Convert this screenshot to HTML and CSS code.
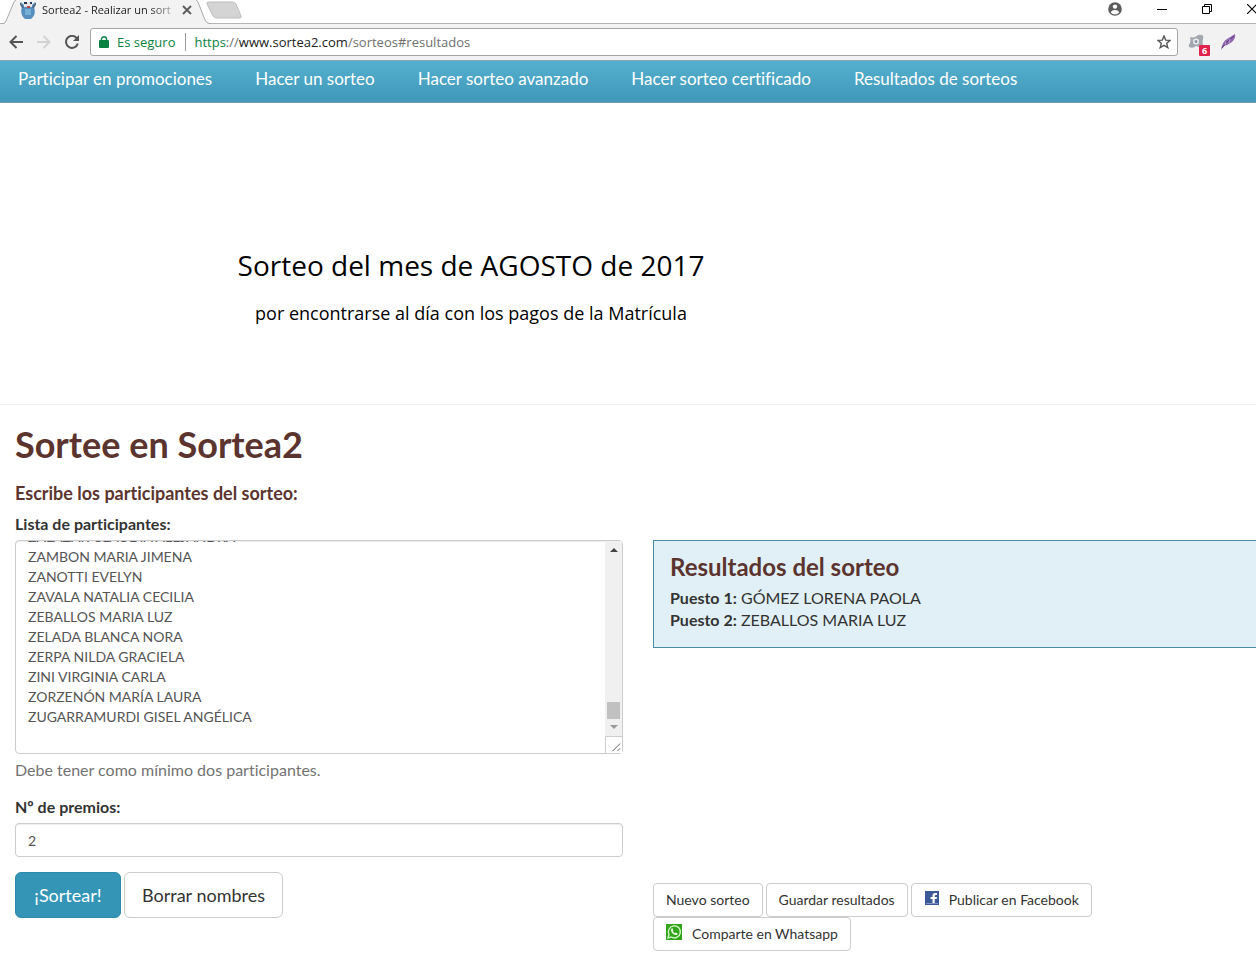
FILE: index.html
```html
<!DOCTYPE html>
<html lang="es">
<head>
<meta charset="utf-8">
<title>Sortea2 - Realizar un sorteo</title>
<link rel="stylesheet" href="styles.css">
</head>
<body>
<header class="browser">
  <div class="tabs">
    <div class="tab">
      <svg class="tab-edge" width="15" height="24" viewBox="0 0 15 24"><path d="M0 23.5H2Q4 23.5 5 21L13 2Q14 0 15 0V24H0Z" fill="#f2f2f2"/><path d="M0 23.5H2Q4 23.5 5 21L13 2Q14 0 15 0" fill="none" stroke="#a9a9a9"/></svg>
      <div class="tab-body">
        <svg width="16" height="18" viewBox="0 0 16 18"><path d="M1 1l3 3h8l3-3-1 5q2 6-1 10l-2 2H5l-2-2Q0 11 2 6Z" fill="#568fbd"/><path d="M4 1h8v5H4Z" fill="#e9e6e8"/><path d="M4 1h3v2H4zM10 1h2v2h-2z" fill="#28364b"/><path d="M7 5h3v2H7z" fill="#b34845"/><path d="M5 8h6v6H5z" fill="#73afd4"/><path d="M0 2l3 5M16 2l-3 5" stroke="#46637c" stroke-width="1.5"/></svg>
        <span class="tab-title">Sortea2 - Realizar un sort</span>
        <button class="plain" aria-label="Cerrar pestaña"><svg width="10" height="10" viewBox="0 0 10 10"><path d="M1 1l8 8M9 1l-8 8" stroke="#5a5a5a" stroke-width="1.8"/></svg></button>
      </div>
      <svg class="tab-edge" width="15" height="24" viewBox="0 0 15 24"><path d="M0 0Q1 0 2 2L9 20Q11 23.5 13 23.5H15V24H0Z" fill="#f2f2f2"/><path d="M0 0Q1 0 2 2L9 20Q11 23.5 13 23.5H15" fill="none" stroke="#a9a9a9"/></svg>
    </div>
    <button class="plain new-tab" aria-label="Nueva pestaña"><svg width="36" height="19" viewBox="0 0 36 19"><path d="M3 2h23q3 0 4 2l5 12q1 2-2 2H11q-3 0-4-2L1 4Q0 2 3 2Z" fill="#d4d4d4" stroke="#bcbcbc"/></svg></button>
    <div class="window-controls">
      <button class="plain" aria-label="Usuario"><svg width="14" height="14" viewBox="0 0 14 14"><circle cx="7" cy="7" r="6.8" fill="#5c5c5c"/><circle cx="7" cy="4.6" r="2.2" fill="#fff"/><path d="M2.6 10.2Q4 8 7 8t4.400 2.200Q9.500 12.500 7 12.500T2.600 10.200Z" fill="#fff"/></svg></button>
      <button class="plain" aria-label="Minimizar"><svg width="10" height="14" viewBox="0 0 10 14"><path d="M0 7.500h10" stroke="#000"/></svg></button>
      <button class="plain" aria-label="Restaurar"><svg width="10" height="10" viewBox="0 0 10 10"><path d="M.5 2.500h7v7h-7zM2.500 2.500v-2h7v7h-2" fill="none" stroke="#000"/></svg></button>
      <button class="plain" aria-label="Cerrar"><svg width="10" height="10" viewBox="0 0 10 10"><path d="M0 0l10 10M10 0L0 10" stroke="#000" stroke-width="1.200"/></svg></button>
    </div>
  </div>
  <div class="toolbar">
    <button class="plain" aria-label="Atrás"><svg width="14" height="14" viewBox="0 0 14 14"><path d="M14 7H1.500M7.500 1l-6 6 6 6" fill="none" stroke="#555" stroke-width="2"/></svg></button>
    <button class="plain" aria-label="Adelante"><svg width="14" height="14" viewBox="0 0 14 14"><path d="M0 7h12.500M6.500 1l6 6-6 6" fill="none" stroke="#d3d3d3" stroke-width="2"/></svg></button>
    <button class="plain" aria-label="Recargar"><svg width="14" height="14" viewBox="0 0 14 14"><path d="M12 3.500A6 6 0 1 0 12.800 8.500" fill="none" stroke="#555" stroke-width="2"/><path d="M14 0v6H8z" fill="#555"/></svg></button>
    <div class="address">
      <svg width="10" height="12" viewBox="0 0 10 12"><path d="M1 4h8q1 0 1 1v6q0 1-1 1H1q-1 0-1-1V5q0-1 1-1Z" fill="#0b8043"/><path d="M2.500 5V3a2.500 2.200 0 0 1 5 0v2" fill="none" stroke="#0b8043" stroke-width="1.400"/></svg>
      <span class="secure">Es seguro</span>
      <span class="url"><span class="green">https</span>://<span class="host">www.sortea2.com</span>/sorteos#resultados</span>
      <button class="plain star" aria-label="Favorito"><svg width="14" height="14" viewBox="0 0 14 14"><path d="M7 1l1.700 4.100 4.400.3-3.400 2.900 1.100 4.300L7 10.300l-3.800 2.300 1.100-4.300L.9 5.400l4.400-.3z" fill="none" stroke="#555" stroke-width="1.400"/></svg></button>
    </div>
    <div class="extensions">
      <button class="plain ext" aria-label="Extensión, 6 avisos"><svg width="16" height="16" viewBox="0 0 16 16"><path d="M2 3q3 1 6-.5Q10 0 14 1q2 1 1 4-1 3 0 6-4 3-7 1-3 3-7 1-1-2 1-4 1-3 0-6Z" fill="#a3a8b0"/><circle cx="8" cy="7.500" r="3" fill="#eee"/><circle cx="8" cy="7.500" r="1.500" fill="#8793a5"/></svg><span class="badge">6</span></button>
      <button class="plain" aria-label="Pluma"><svg width="15" height="16" viewBox="0 0 15 16"><path d="M0 16Q1 8 6 5t8-5q1 4-3 8Q7 11 3 12Z" fill="#9168ae"/><path d="M1 14Q5 8 13 2" fill="none" stroke="#5c347c"/><path d="M5 8l-1 3M9 5L8 9" stroke="#c8addd" stroke-width=".8"/></svg></button>
    </div>
  </div>
</header>
<nav class="nav">
  <a href="#">Participar en promociones</a>
  <a href="#">Hacer un sorteo</a>
  <a href="#">Hacer sorteo avanzado</a>
  <a href="#">Hacer sorteo certificado</a>
  <a href="#resultados">Resultados de sorteos</a>
</nav>
<section class="banner">
  <div class="banner-text">
    <p class="banner-title">Sorteo del mes de AGOSTO de 2017</p>
    <p class="banner-sub">por encontrarse al día con los pagos de la Matrícula</p>
  </div>
</section>
<main class="main">
  <h1>Sortee en Sortea2</h1>
  <div class="columns">
    <form class="draw">
      <h2>Escribe los participantes del sorteo:</h2>
      <label for="names">Lista de participantes:</label>
      <div class="names-box">
        <textarea id="names" class="field names">ZALAZAR CLAUDIA ALEJANDRA
ZAMBON MARIA JIMENA
ZANOTTI EVELYN
ZAVALA NATALIA CECILIA
ZEBALLOS MARIA LUZ
ZELADA BLANCA NORA
ZERPA NILDA GRACIELA
ZINI VIRGINIA CARLA
ZORZENÓN MARÍA LAURA
ZUGARRAMURDI GISEL ANGÉLICA
</textarea>
        <div class="scrollbar" aria-hidden="true">
          <div class="track">
            <svg width="8" height="4" viewBox="0 0 8 4"><path d="M0 4l4-4 4 4z" fill="#444"/></svg>
            <div class="thumb"></div>
            <svg width="8" height="4" viewBox="0 0 8 4"><path d="M0 0l4 4 4-4z" fill="#999"/></svg>
          </div>
          <svg class="grip" width="17" height="17" viewBox="0 0 17 17"><path d="M7 15l8-8M12 15l3-3" stroke="#555"/></svg>
        </div>
      </div>
      <p class="help">Debe tener como mínimo dos participantes.</p>
      <label for="prizes">Nº de premios:</label>
      <input id="prizes" class="field" type="text" value="2">
      <div class="actions">
        <button type="button" class="btn large primary">¡Sortear!</button>
        <button type="button" class="btn large">Borrar nombres</button>
      </div>
    </form>
    <section class="side" id="resultados">
      <div class="results">
        <h3>Resultados del sorteo</h3>
        <p><strong>Puesto 1:</strong> GÓMEZ LORENA PAOLA</p>
        <p><strong>Puesto 2:</strong> ZEBALLOS MARIA LUZ</p>
      </div>
      <div class="share">
        <button class="btn">Nuevo sorteo</button>
        <button class="btn">Guardar resultados</button>
        <button class="btn"><svg width="14" height="14" viewBox="0 0 14 14"><path d="M0 0h14v14H0z" fill="#3b5998"/><path d="M1 12h12v1H1z" fill="#7f94bf"/><path d="M7.500 12V8H5.500V6h2V4.500Q7.500 2 10 2h2v2h-1q-1.300 0-1.300 1v1H12l-.3 2h-2v4z" fill="#fff"/></svg>Publicar en Facebook</button>
        <button class="btn whatsapp"><svg width="16" height="16" viewBox="0 0 16 16"><path d="M0 0h16v16H0z" fill="#33a51c"/><path d="M2 14l1-3.500A6 6 0 1 1 5.300 13Z" fill="none" stroke="#d9f7ce" stroke-width="1.300"/><path d="M5.500 4.500l1-.3.900 2-.7.900q.7 1.500 2.200 2.200l.9-.8 1.900.9q0 1.600-1.700 1.700Q7 11 5.200 7.500 4.500 5.500 5.500 4.500Z" fill="#e8fbe1"/></svg>Comparte en Whatsapp</button>
      </div>
    </section>
  </div>
</main>
<script src="script.js"></script>
</body>
</html>
```
FILE: script.js
```js
// Keep the end of the participant list in view.
const names = document.getElementById("names");
names.scrollTop = names.scrollHeight;
```
FILE: styles.css
```css
* { box-sizing: border-box; }
body {
  margin: 0;
  background: #fff;
  color: #333;
  font: 16px/22px Lato, "Open Sans", sans-serif;
  font-variant-ligatures: none;
  overflow-x: hidden;
}
h1, h2, h3, p { margin: 0; }
h1, h2, h3 { color: #5c342f; font-weight: 700; }
svg { display: block; flex: none; }
.plain { padding: 0; border: 0; background: none; flex: none; }

.browser { font-family: "Open Sans", "Noto Sans", sans-serif; background: #f2f2f2; }
.tabs { display: flex; height: 24px; background: #fff; border-bottom: 1px solid #b5b5b5; }
.tab { display: flex; height: 24px; padding-left: 1px; }
.tab-body { display: flex; align-items: center; gap: 6px; width: 180px; padding: 0 4px 4px 4px; background: #f2f2f2; }
.tab-title {
  flex: 1;
  white-space: nowrap;
  font-size: 11px;
  line-height: 20px;
  color: #222;
  mask-image: linear-gradient(to right, #000 80%, rgba(0, 0, 0, .2));
}
.new-tab { align-self: flex-start; margin-left: -5px; }
.window-controls { display: flex; align-items: center; gap: 35px; height: 17px; margin: 0 -1px 0 auto; }

.toolbar { display: flex; align-items: center; gap: 14px; height: 36px; padding: 0 20px 0 9px; }
.address {
  flex: 1;
  display: flex;
  align-items: center;
  height: 28px;
  margin-left: -3px;
  padding: 0 6px 0 8px;
  border: 1px solid #a5a5a5;
  border-radius: 3px;
  background: #fff;
  font-size: 13px;
  line-height: 18px;
}
.secure { margin-left: 8px; padding-right: 10px; border-right: 1px solid #999; color: #0b8043; }
.url { padding-left: 8px; color: #6f6f6f; }
.green { color: #0b8043; }
.host { color: #222; }
.star { margin-left: auto; }
.extensions { display: flex; gap: 17px; margin-left: -4px; }
.ext { position: relative; }
.badge {
  position: absolute;
  left: 11px;
  top: 11px;
  width: 11px;
  height: 11px;
  border-radius: 1px;
  background: #e0234c;
  color: #fff;
  font: 700 9px/11px "Open Sans", sans-serif;
}

.nav {
  display: flex;
  gap: 43px;
  height: 43px;
  padding: 7px 18px 0;
  border-top: 1px solid #8ba9b3;
  border-bottom: 1px solid #6f9caf;
  background: linear-gradient(#54afce, #4098b9);
  font-size: 17px;
  line-height: 22px;
}
.nav a { color: #fff; text-decoration: none; white-space: nowrap; }

.banner { height: 302px; padding: 142px 0 0 236px; border-bottom: 1px solid #eee; color: #000; font-family: "Open Sans", sans-serif; }
.banner-text { width: 470px; text-align: center; white-space: nowrap; }
.banner-title { font-size: 28px; line-height: 40px; }
.banner-sub { margin-top: 14px; font-size: 18px; line-height: 28px; }

.main { padding: 19px 0 7px 15px; overflow: hidden; }
h1 { font-size: 36px; line-height: 40px; }
.columns { display: grid; grid-template-columns: 1fr 1fr; gap: 30px; margin: 19px -5px 0 0; }
h2 { font-size: 18px; line-height: 20px; margin-bottom: 10px; }
label { display: block; margin-bottom: 5px; font-weight: 700; }
.field {
  display: block;
  width: 100%;
  height: 34px;
  padding: 6px 12px;
  border: 1px solid #ccc;
  border-radius: 4px;
  background: #fff;
  box-shadow: inset 0 1px 1px rgba(0, 0, 0, .075);
  color: #555;
  font: 14px/20px Lato, sans-serif;
}
.names-box { position: relative; }
.names { height: 214px; resize: none; overflow: hidden; }
.scrollbar { position: absolute; top: 1px; right: 1px; bottom: 1px; display: flex; flex-direction: column; width: 17px; }
.track { flex: 1; display: flex; flex-direction: column; align-items: center; padding: 7px 0; background: #f0f0f0; }
.thumb { width: 13px; height: 17px; margin: auto 0 6px; background: #c1c1c1; }
.grip { border-top: 1px solid #ccc; border-left: 1px solid #ccc; background: #fff; }
.help { margin: 5px 0 15px; color: #737373; }
.actions { display: flex; gap: 3px; margin-top: 15px; }
.btn {
  display: inline-flex;
  align-items: center;
  justify-content: center;
  height: 34px;
  padding: 0 12px;
  border: 1px solid #ccc;
  border-radius: 4px;
  background: #fff;
  color: #333;
  font: 14px/20px Lato, sans-serif;
  font-variant-ligatures: none;
  white-space: nowrap;
}
.btn svg { margin: -4px 10px 0 1px; }
.btn.whatsapp svg { margin-left: 0; }
.large { height: 46px; padding: 0 17px; border-radius: 6px; font-size: 18px; line-height: 24px; }
.primary { min-width: 106px; border-color: #2e8aab; background: #3495b6; color: #fff; }

.side { padding-top: 57px; }
.results { height: 108px; padding: 12px 16px; border: 1px solid #4b8ba3; background: #e1f0f6; }
h3 { font-size: 24px; line-height: 28px; margin-bottom: 6px; }
.share { display: flex; flex-wrap: wrap; column-gap: 3px; max-width: 500px; margin-top: 235px; }
```
